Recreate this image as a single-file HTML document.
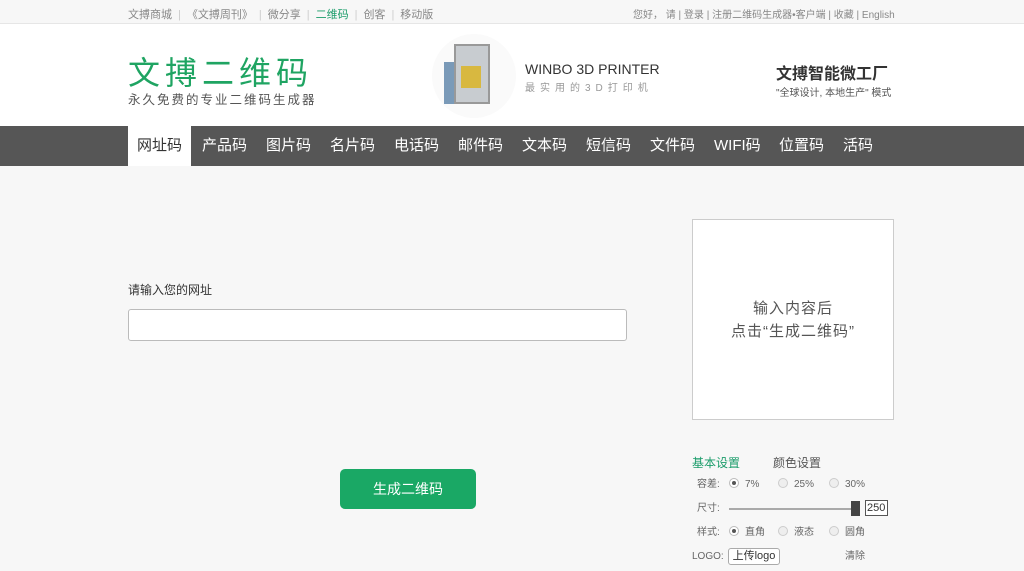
<!DOCTYPE html>
<html><head><meta charset="utf-8"><style>
*{margin:0;padding:0;box-sizing:border-box}
body{width:1024px;height:571px;overflow:hidden;background:#f7f7f7;font-family:"Liberation Sans","Noto Sans CJK SC",sans-serif;color:#333;position:relative}
.a{position:absolute;white-space:nowrap}
.top{position:absolute;left:0;top:0;width:1024px;height:24px;background:#f7f7f7;border-bottom:1px solid #e6e6e6;font-size:11px;color:#888}
.hd{position:absolute;left:0;top:24px;width:1024px;height:102px;background:#fff}
.nav{position:absolute;left:0;top:126px;width:1024px;height:40px;background:#565656}
.nav span{position:absolute;top:0;height:40px;line-height:40px;color:#fff;font-size:15px}
.sep{color:#ccc;margin:0 6px}
.r{display:inline-block;width:10px;height:10px;border-radius:50%;border:1px solid #ccc;background:#eee;vertical-align:middle;margin-right:6px;position:relative;top:-1px}
.r.on{background:#fff;border-color:#bbb}
.r.on:after{content:"";position:absolute;left:2px;top:2px;width:4px;height:4px;border-radius:50%;background:#555}
.s{font-size:10px;color:#666;line-height:12px}
</style></head><body>
<div class="top">
<div class="a" style="left:128px;top:6px">文搏商城<span class="sep">|</span>《文搏周刊》<span class="sep">|</span>微分享<span class="sep">|</span><span style="color:#1a9c6a">二维码</span><span class="sep">|</span>创客<span class="sep">|</span>移动版</div>
<div class="a" style="left:633px;top:6px;font-size:10px">您好， 请 | 登录 | 注册二维码生成器•客户端 | 收藏 | English</div>
</div>
<div class="hd">
<div class="a" style="left:128px;top:24px;font-size:32px;color:#1fa462;letter-spacing:5px">文搏二维码</div>
<div class="a" style="left:128px;top:65px;font-size:12.5px;color:#555;letter-spacing:2px">永久免费的专业二维码生成器</div>
<div class="a" style="left:432px;top:10px;width:84px;height:84px;border-radius:50%;background:#fafafa"></div>
<div class="a" style="left:454px;top:20px;width:36px;height:60px;background:#c8ccd0;border:2px solid #999"></div>
<div class="a" style="left:461px;top:42px;width:20px;height:22px;background:#d8b840"></div>
<div class="a" style="left:444px;top:38px;width:10px;height:42px;background:#7a9ab8"></div>
<div class="a" style="left:525px;top:37px;font-size:14px;color:#333">WINBO 3D PRINTER</div>
<div class="a" style="left:525px;top:55px;font-size:10px;color:#999;letter-spacing:5px">最实用的3D打印机</div>
<div class="a" style="left:776px;top:36px;font-size:16px;font-weight:bold;color:#333">文搏智能微工厂</div>
<div class="a" style="left:776px;top:60px;font-size:10px;color:#555">"全球设计, 本地生产" 模式</div>
</div>
<div class="nav">
<span style="left:128px;width:63px;background:#fff;color:#333;text-align:center">网址码</span>
<span style="left:202px">产品码</span><span style="left:266px">图片码</span><span style="left:330px">名片码</span><span style="left:394px">电话码</span><span style="left:458px">邮件码</span><span style="left:522px">文本码</span><span style="left:586px">短信码</span><span style="left:650px">文件码</span><span style="left:714px">WIFI码</span><span style="left:779px">位置码</span><span style="left:843px">活码</span>
</div>
<div class="a" style="left:128px;top:281px;font-size:12px">请输入您的网址</div>
<div class="a" style="left:128px;top:309px;width:499px;height:32px;background:#fff;border:1px solid #bbb;border-radius:3px"></div>
<div class="a" style="left:340px;top:469px;width:136px;height:40px;background:#1aa865;border-radius:5px;color:#fff;font-size:14px;line-height:40px;text-align:center">生成二维码</div>
<div class="a" style="left:692px;top:219px;width:202px;height:201px;background:#fff;border:1px solid #ccc;font-size:15px;color:#555;text-align:center;padding-top:77px;line-height:23px;white-space:normal;letter-spacing:1px">输入内容后<br>点击“生成二维码”</div>
<div class="a" style="left:692px;top:454px;font-size:12px;color:#1a9c6a">基本设置</div>
<div class="a" style="left:773px;top:454px;font-size:12px;color:#555">颜色设置</div>
<div class="a s" style="left:697px;top:479px">容差:</div>
<div class="a s" style="left:729px;top:479px"><i class="r on"></i>7%</div>
<div class="a s" style="left:778px;top:479px"><i class="r"></i>25%</div>
<div class="a s" style="left:829px;top:479px"><i class="r"></i>30%</div>
<div class="a s" style="left:697px;top:503px">尺寸:</div>
<div class="a" style="left:729px;top:508px;width:124px;height:2px;background:#aaa"></div>
<div class="a" style="left:851px;top:501px;width:9px;height:15px;background:#444"></div>
<div class="a" style="left:865px;top:500px;width:23px;height:16px;border:1px solid #555;background:#fff;font-size:11px;line-height:14px;padding-left:1px">250</div>
<div class="a s" style="left:697px;top:527px">样式:</div>
<div class="a s" style="left:729px;top:527px"><i class="r on"></i>直角</div>
<div class="a s" style="left:778px;top:527px"><i class="r"></i>液态</div>
<div class="a s" style="left:829px;top:527px"><i class="r"></i>圆角</div>
<div class="a s" style="left:692px;top:551px">LOGO:</div>
<div class="a" style="left:728px;top:548px;width:52px;height:17px;background:#fff;border:1px solid #aaa;border-radius:3px;font-size:11px;line-height:15px;text-align:center">上传logo</div>
<div class="a s" style="left:845px;top:551px">清除</div>
</body></html>
